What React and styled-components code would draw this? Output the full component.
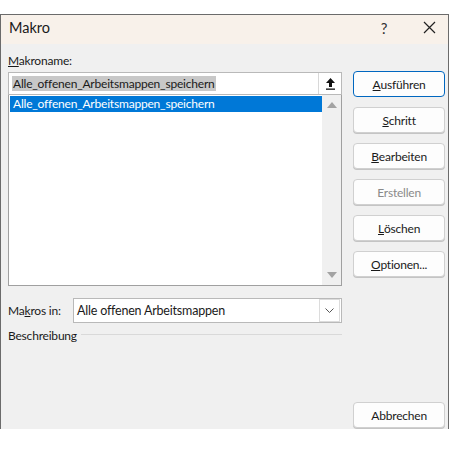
import React from 'react';
import styled, { createGlobalStyle } from 'styled-components';

const Global = createGlobalStyle`
  body {
    margin: 0;
    background: #ffffff;
    font-family: Lato, "Noto Sans", sans-serif;
    font-size: 12px;
    letter-spacing: -0.2px;
    color: #1a1a1a;
  }
`

const Dialog = styled.div`
  margin-top: 14px;
  width: 449px;
  height: 415px;
  box-sizing: border-box;
  border: 1px solid #6b6b6b;
  border-bottom: none;
  background: #f0f0f0;
  display: flex;
  flex-direction: column;
  overflow: hidden;
`

const TitleBar = styled.div`
  height: 29px;
  background: #f8f1ea;
  display: flex;
  align-items: center;
  padding-left: 8px;
  padding-bottom: 4px;
  box-sizing: border-box;
`

const Title = styled.span`
  font-size: 14.5px;
  letter-spacing: 0;
  flex: 1;
`

const TitleBtn = styled.span`
  width: ${p => p.w}px;
  display: flex;
  justify-content: center;
  font-size: 15px;
  color: #333;
`

const Body = styled.div`
  flex: 1;
  display: flex;
  padding: 7px 3px 1px 7px;
  gap: 11px;
`

const Left = styled.div`
  width: 335px;
  display: flex;
  flex-direction: column;
`

const Label = styled.div`
  height: 21px;
  line-height: 20px;
`

const U = styled.span`
  text-decoration: underline;
`

const InputBox = styled.div`
  height: 23px;
  box-sizing: border-box;
  border: 1px solid #b9b9b9;
  background: #fff;
  display: flex;
  align-items: center;
  padding-left: 3px;
`

const Selected = styled.span`
  background: #c8c8c8;
  padding: 0 1px;
  line-height: 16px;
`

const SelWrap = styled.div`
  flex: 1;
`

const UpBtn = styled.div`
  width: 22px;
  height: 21px;
  border-left: 1px solid #d8d8d8;
  display: flex;
  align-items: center;
  justify-content: center;
`

const List = styled.div`
  height: 191px;
  box-sizing: border-box;
  border: 1px solid #a0a0a0;
  border-top: none;
  background: #fff;
  display: flex;
`

const ListItems = styled.div`
  flex: 1;
  padding: 1px 0 0 1px;
`

const Item = styled.div`
  height: 16px;
  line-height: 16px;
  padding-left: 3px;
  background: ${p => (p.active ? '#0078d7' : 'transparent')};
  color: ${p => (p.active ? '#fff' : '#1a1a1a')};
`

const Scroll = styled.div`
  width: 19px;
  background: #f0f0f0;
  display: flex;
  flex-direction: column;
  justify-content: space-between;
  align-items: center;
  padding: 7px 0;
`

const SourceRow = styled.div`
  margin-top: 12px;
  display: flex;
  align-items: center;
  height: 25px;
`

const SourceLabel = styled.span`
  width: 65px;
  flex-shrink: 0;
`

const Select = styled.div`
  flex: 1;
  height: 25px;
  box-sizing: border-box;
  border: 1px solid #b9b9b9;
  background: #fff;
  display: flex;
  align-items: center;
  padding-left: 3px;
`

const SelectText = styled.span`
  flex: 1;
  font-size: 12.5px;
`

const DropBtn = styled.div`
  width: 19px;
  height: 21px;
  margin-right: 1px;
  border: 1px solid #dcdcdc;
  display: flex;
  align-items: center;
  justify-content: center;
`

const DescRow = styled.div`
  margin-top: 5px;
  display: flex;
  align-items: center;
  gap: 4px;
`

const Rule = styled.div`
  flex: 1;
  height: 1px;
  margin-top: -2px;
  background: #d9d9d9;
`

const Right = styled.div`
  width: 92px;
  display: flex;
  flex-direction: column;
  padding-top: 20px;
  gap: 10px;
`

const Button = styled.div`
  height: 26px;
  flex-shrink: 0;
  box-sizing: border-box;
  border: 1px solid ${p => (p.primary ? '#0067c0' : '#d0d0d0')};
  border-radius: 4px;
  background: #fdfdfd;
  display: flex;
  align-items: center;
  justify-content: center;
  color: ${p => (p.disabled ? '#8a8a8a' : '#1a1a1a')};
  box-shadow: ${p => (p.primary ? 'none' : '0 1px 0 #c4c4c4')};
`

const Spacer = styled.div`
  flex: 1;
`

const Arrow = ({ up }) => (
  <svg width="10" height="6" viewBox="0 0 10 6">
    <path d={up ? 'M0 6 L5 0 L10 6 Z' : 'M0 0 L5 6 L10 0 Z'} fill="#a3a3a3" />
  </svg>
)

export default function App() {
  return (
    <>
      <Global />
      <Dialog>
        <TitleBar>
          <Title>Makro</Title>
          <TitleBtn w={52}>?</TitleBtn>
          <TitleBtn w={38}>
            <svg width="13" height="13" viewBox="0 0 13 13">
              <path d="M1 1 L12 12 M12 1 L1 12" stroke="#222" strokeWidth="1.2" />
            </svg>
          </TitleBtn>
        </TitleBar>
        <Body>
          <Left>
            <Label><U>M</U>akroname:</Label>
            <InputBox>
              <SelWrap><Selected>Alle_offenen_Arbeitsmappen_speichern</Selected></SelWrap>
              <UpBtn>
                <svg width="11" height="13" viewBox="0 0 11 13">
                  <path d="M5.5 1 L10 6 L7 6 L7 10 L4 10 L4 6 L1 6 Z" fill="#111" />
                  <rect x="1" y="11.5" width="9" height="1.3" fill="#111" />
                </svg>
              </UpBtn>
            </InputBox>
            <List>
              <ListItems>
                <Item active>Alle_offenen_Arbeitsmappen_speichern</Item>
              </ListItems>
              <Scroll>
                <Arrow up />
                <Arrow />
              </Scroll>
            </List>
            <SourceRow>
              <SourceLabel>Ma<U>k</U>ros in:</SourceLabel>
              <Select>
                <SelectText>Alle offenen Arbeitsmappen</SelectText>
                <DropBtn>
                  <svg width="9" height="5" viewBox="0 0 9 5">
                    <path d="M0.5 0.5 L4.5 4.5 L8.5 0.5" stroke="#555" fill="none" />
                  </svg>
                </DropBtn>
              </Select>
            </SourceRow>
            <DescRow>
              <span>Beschreibung</span>
              <Rule />
            </DescRow>
          </Left>
          <Right>
            <Button primary><U>A</U>usführen</Button>
            <Button><U>S</U>chritt</Button>
            <Button><U>B</U>earbeiten</Button>
            <Button disabled>Erstellen</Button>
            <Button><U>L</U>öschen</Button>
            <Button><U>O</U>ptionen...</Button>
            <Spacer />
            <Button>Abbrechen</Button>
          </Right>
        </Body>
      </Dialog>
    </>
  );
}
